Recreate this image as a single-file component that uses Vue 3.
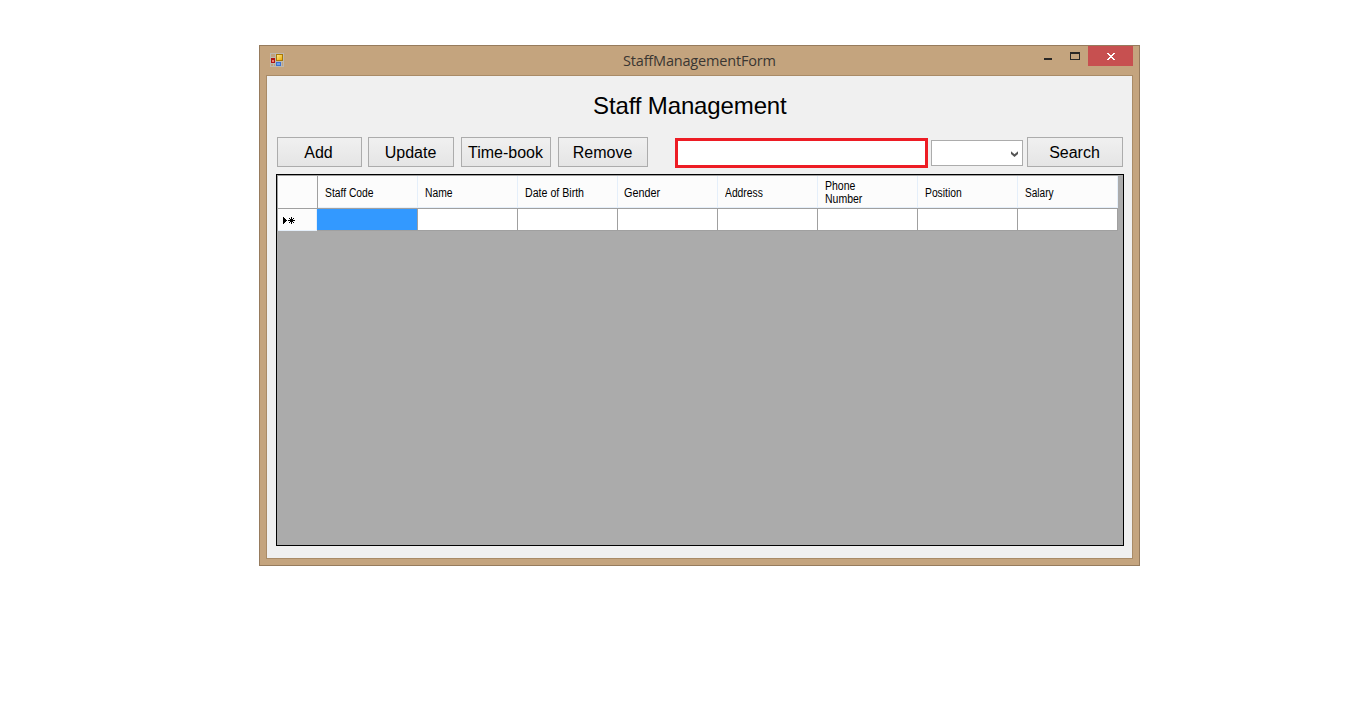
<script setup>
const actions = [
  { label: 'Add', cls: 'add' },
  { label: 'Update', cls: 'update' },
  { label: 'Time-book', cls: 'timebook' },
  { label: 'Remove', cls: 'remove' },
]
const columns = [
  { label: 'Staff Code', cls: 'c1' },
  { label: 'Name', cls: 'c2' },
  { label: 'Date of Birth', cls: 'c3' },
  { label: 'Gender', cls: 'c4' },
  { label: 'Address', cls: 'c5' },
  { label: 'Phone Number', cls: 'c6' },
  { label: 'Position', cls: 'c7' },
  { label: 'Salary', cls: 'c8' },
]
</script>

<template>
  <main class="desktop">
    <section class="window">
      <header class="titlebar">
        <svg class="app-icon" width="14" height="14" viewBox="0 0 14 14" shape-rendering="crispEdges">
          <defs>
            <linearGradient id="gold" x1="0" y1="0" x2="1" y2="1">
              <stop offset="0" stop-color="#ffe88a" />
              <stop offset="1" stop-color="#e9ab0c" />
            </linearGradient>
          </defs>
          <rect width="14" height="14" fill="#bdb9b1" />
          <path d="M1 1h4v3H1zM1 11h2v2H1zM4 11h1v2H4zM12 9h1v4h-1z" fill="#c0a27f" />
          <rect x="6" y="1" width="7" height="7" fill="#a87808" />
          <rect x="7" y="2" width="5" height="5" fill="url(#gold)" />
          <rect x="1" y="5" width="4" height="5" fill="#b01414" />
          <rect x="2" y="7" width="2" height="2" fill="#f08070" />
          <rect x="6" y="9" width="5" height="4" fill="#3b70cf" />
          <rect x="7" y="10" width="3" height="2" fill="#6ca0ee" />
        </svg>
        <span class="caption"><span class="caption-text">StaffManagementForm</span></span>
        <div class="controls">
          <svg width="58" height="20" viewBox="0 0 58 20" shape-rendering="crispEdges">
            <path d="M14 12h8v2h-8z" fill="#2a2826" />
            <path d="M40 6h10v8H40zM41 8v5h8V8z" fill="#2a2826" fill-rule="evenodd" />
          </svg>
          <div class="close">
            <svg width="8" height="7" viewBox="0 0 8 7" shape-rendering="crispEdges">
              <path d="M0 0h2v1h1v1h2V1h1V0h2v1H7v1H6v1H5v1h1v1h1v1h1v1H6V6H5V5H3v1H2v1H0V6h1V5h1V4h1V3H2V2H1V1H0z" fill="#fff" />
            </svg>
          </div>
        </div>
      </header>
      <div class="client">
        <h1><span>Staff Management</span></h1>
        <div class="toolbar">
          <button v-for="a in actions" :key="a.label" :class="a.cls"><span>{{ a.label }}</span></button>
          <input class="query" type="text" />
          <div class="combo">
            <svg width="7" height="6" viewBox="0 0 7 6">
              <path d="M0 .3L3.5 3.3L7 .3V2.9L3.5 6L0 2.9z" fill="#555" />
            </svg>
          </div>
          <button class="search"><span>Search</span></button>
        </div>
        <div class="grid">
          <div class="row head">
            <div class="corner"></div>
            <div v-for="c in columns" :key="c.label" class="hcell" :class="c.cls"><span>{{ c.label }}</span></div>
          </div>
          <div class="row body">
            <div class="rowhead">
              <svg width="12" height="7" viewBox="0 0 12 7" shape-rendering="crispEdges">
                <path d="M0 0h1v1h1v1h1v1h1v1H3v1H2v1H1v1H0z" fill="#000" />
                <path d="M8 0h1v2h1V1h1v1h-1v1h2v1h-2v1h1v1h-1V5H9v2H8V5H7v1H6V5h1V4H5V3h2V2H6V1h1v1h1z" fill="#000" />
              </svg>
            </div>
            <div v-for="(c, i) in columns" :key="c.label" class="cell" :class="{ selected: i === 0 }"></div>
          </div>
        </div>
      </div>
    </section>
  </main>
</template>

<style>
body { margin: 0; background: #fff; }
</style>

<style scoped>
* { box-sizing: border-box; }
.desktop {
  width: 1360px;
  height: 720px;
  padding: 45px 0 0 259px;
  background: #fff;
  font-family: "Liberation Sans", Arial, sans-serif;
  color: #000;
  overflow: hidden;
}
.window {
  width: 881px;
  height: 521px;
  border: 1px solid #967b5d;
  background: #c4a47e;
  padding: 0 6px;
}
.titlebar { height: 29px; display: flex; align-items: flex-start; }
.app-icon { margin: 7px 0 0 4px; flex: none; }
.caption {
  flex: 1;
  padding: 4px 0 0 339px;
  font: 14.5px/22px "Open Sans", "Noto Sans", sans-serif;
  color: #3a3632;
  white-space: nowrap;
}
.caption-text { display: inline-block; letter-spacing: -0.18px; }
.controls { display: flex; flex: none; }
.close {
  width: 45px;
  height: 20px;
  background: #c75050;
  display: flex;
  padding: 7px 0 0 19px;
}
.controls svg { display: block; }
.client {
  width: 867px;
  height: 484px;
  border: 1px solid #a98b67;
  background: #f0f0f0;
  padding: 0 9px;
}
h1 {
  margin: 0;
  height: 61px;
  padding: 16px 0 0 317px;
  font-size: 24px;
  line-height: 28px;
  font-weight: 400;
  letter-spacing: -0.13px;
  white-space: nowrap;
}
.toolbar { display: flex; height: 37px; padding-left: 1px; align-items: flex-start; }
button {
  height: 30px;
  border: 1px solid #acacac;
  background: linear-gradient(#f0f0f0, #e5e5e5);
  font: 16px/28px "Liberation Sans", Arial, sans-serif;
  color: #000;
  padding: 1px 0 0;
  margin: 0;
  white-space: nowrap;
  flex: none;
}
button span { display: block; line-height: 28px; }
.add { width: 85px; margin-right: 6px; }
.add span { margin-right: 2px; }
.update { width: 86px; margin-right: 7px; }
.update span, .timebook span, .remove span { margin-right: 1px; }
.timebook { width: 90px; margin-right: 7px; }
.remove { width: 90px; margin-right: 27px; }
.query {
  width: 253px;
  height: 30px;
  margin: 1px 3px 0 0;
  padding: 0;
  border: 3px solid #ed1c24;
  border-radius: 0;
  background: #fff;
  outline: none;
  flex: none;
}
.combo {
  width: 92px;
  height: 26px;
  margin: 3px 4px 0 0;
  border: 1px solid #acacac;
  background: #fff;
  display: flex;
  justify-content: flex-end;
  padding: 10px 4px 0 0;
  flex: none;
}
.search { width: 96px; }
.search span { margin-right: 1px; }
.grid {
  width: 848px;
  height: 372px;
  border: 1px solid #000;
  background: #ababab;
}
.row { display: flex; }
.head {
  height: 34px;
  width: 841px;
  border-top: 1px solid #a0a0a0;
  border-left: 1px solid #a0a0a0;
  border-bottom: 1px solid #a0a0a0;
  background: #fcfcfc;
}
.corner { width: 40px; border-right: 1px solid #a0a0a0; flex: none; }
.hcell {
  width: 100px;
  flex: none;
  border-right: 1px solid #e5effa;
  border-bottom: 1px solid #e5effa;
  font-size: 12px;
  line-height: 13px;
  display: flex;
  align-items: center;
  padding: 3px 0 0 7px;
}
.hcell span { white-space: nowrap; transform: scaleX(0.86); transform-origin: 0 50%; }
.c3 span { transform: scaleX(0.885); }
.c4 { padding-left: 6px; }
.c4 span { transform: scaleX(0.9); }
.c6 span { white-space: normal; width: 60px; transform: scaleX(0.875); }
.c8 span { transform: scaleX(0.84); }
.body { height: 22px; border-left: 1px solid #a0a0a0; width: 841px; }
.rowhead {
  width: 39px;
  height: 22px;
  flex: none;
  background: #fcfcfc;
  border-right: 1px solid #e5effa;
  border-bottom: 1px solid #e5effa;
  padding: 8px 0 0 5px;
}
.rowhead svg { display: block; }
.cell {
  width: 100px;
  height: 22px;
  flex: none;
  background: #fff;
  border-right: 1px solid #a0a0a0;
  border-bottom: 1px solid #a0a0a0;
}
.selected { width: 101px; background: #3399ff; }
</style>
